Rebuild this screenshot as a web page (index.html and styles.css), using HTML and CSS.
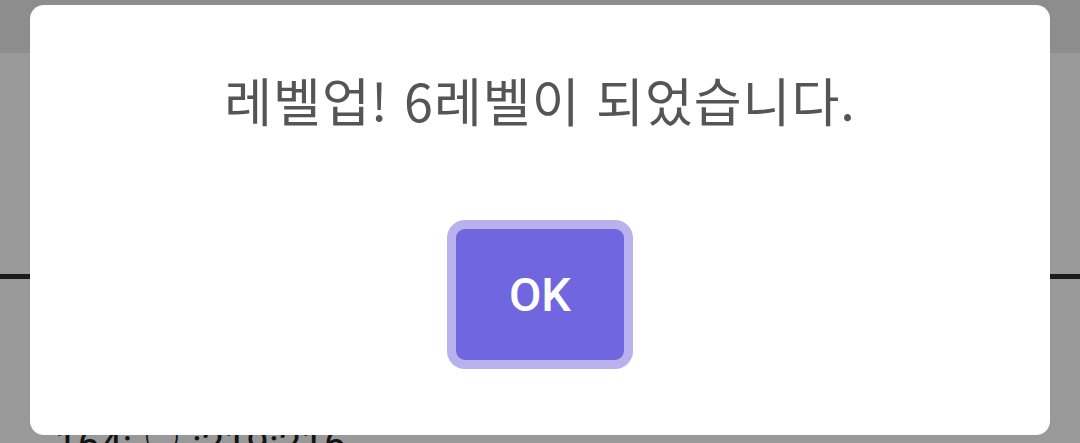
FILE: index.html
```html
<!DOCTYPE html>
<html lang="ko">
<head>
  <meta charset="UTF-8" />
  <meta name="viewport" content="width=device-width, initial-scale=1.0"/>
  <title>레벨업</title>
  <link rel="stylesheet" href="styles.css">
</head>
<body>

  <!-- Page behind the popup -->
  <div class="page">
    <div class="top-bar"></div>
    <div class="content"></div>
    <div class="divider"></div>
    <div class="stats">164: ♡ :219:216</div>
  </div>

  <!-- Level up popup -->
  <div class="overlay">
    <div class="dialog">
      <div class="message">레벨업! 6레벨이 되었습니다.</div>
      <button class="ok-btn">OK</button>
    </div>
  </div>

</body>
</html>
```

FILE: styles.css
```css
* {
  margin: 0;
  padding: 0;
  box-sizing: border-box;
}

body {
  font-family: "Noto Sans CJK KR", Roboto, sans-serif;
  background: #fff;
  width: 1080px;
  height: 443px;
  overflow: hidden;
}

.page {
  display: flex;
  flex-direction: column;
  height: 443px;
  overflow: hidden;
}

.page > div {
  flex-shrink: 0;
}

.top-bar {
  height: 53px;
  background: #ececec;
}

.content {
  height: 221px;
}

.divider {
  height: 5px;
  background: #2e2e2e;
}

.stats {
  margin-top: 146px;
  padding-left: 55px;
  font-family: Roboto, sans-serif;
  font-size: 40px;
  line-height: 1;
  color: #222;
}

.overlay {
  position: fixed;
  inset: 0;
  background: rgba(0, 0, 0, 0.4);
}

.dialog {
  margin: 5px 30px 0;
  height: 430px;
  background: #fff;
  border-radius: 14px;
  display: flex;
  flex-direction: column;
  align-items: center;
  padding-top: 65px;
}

.message {
  font-size: 52px;
  line-height: 60px;
  letter-spacing: 1px;
  color: #555;
}

.ok-btn {
  margin-top: 90px;
  width: 186px;
  height: 149px;
  border: 9px solid #b8b1ee;
  border-radius: 18px;
  background: #6f66e0;
  color: #fff;
  font-family: Roboto, sans-serif;
  font-weight: 500;
  font-size: 47px;
}
```
